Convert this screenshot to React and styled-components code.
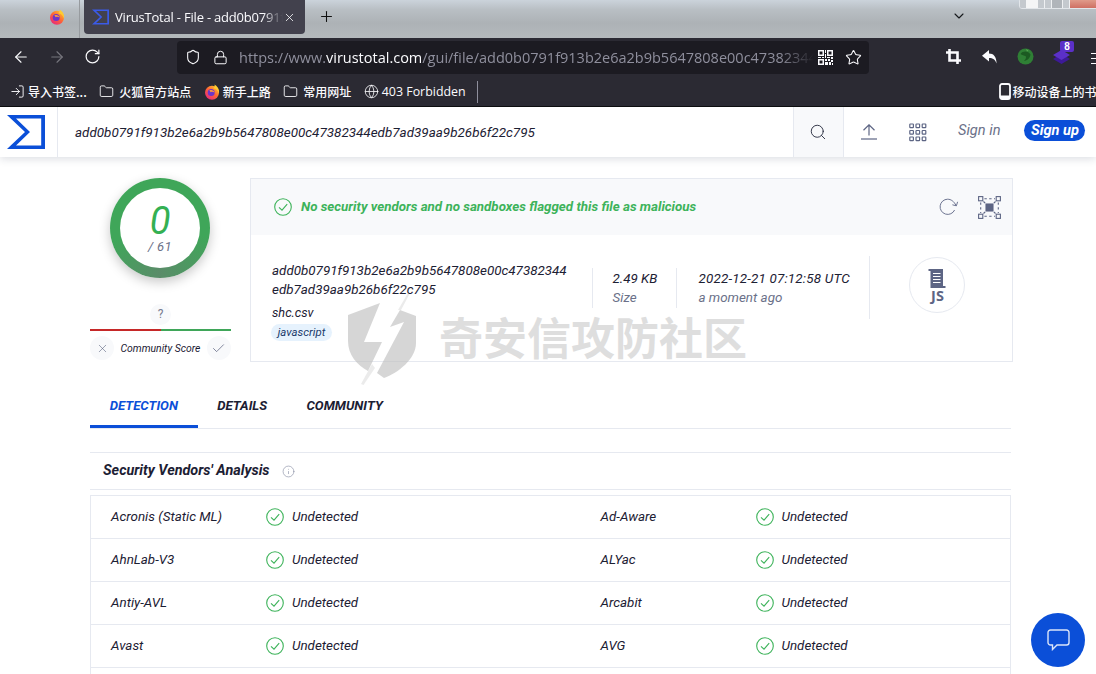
import React from "react";
import styled, { createGlobalStyle } from "styled-components";
import { ArrowLeft, ArrowRight, RotateCw, Shield, Lock, Star, Folder, Globe, LogIn, Search, X, Check, Plus, ChevronDown, Info } from "lucide-react";

const Global = createGlobalStyle`
  html, body { margin: 0; padding: 0; background: #fff; }
  * { box-sizing: border-box; }
  #root { width: 1096px; height: 674px; overflow: hidden; }
`;

const Screen = styled.div`
  position: relative;
  width: 1096px;
  height: 674px;
  overflow: hidden;
  background: #fff;
  font-family: Roboto, "Liberation Sans", sans-serif;
  color: #1c2033;
`;

const TitleBar = styled.div`
  position: relative;
  height: 38px;
  display: flex;
  align-items: flex-start;
  background: linear-gradient(180deg, #cbd3db 0%, #b9bfc4 25%, #adb2b6 60%, #b4b9bc 100%);
`;
const TabIconSlot = styled.div`
  width: 84px;
  height: 34px;
  padding-left: 49px;
  display: flex;
  align-items: center;
  position: relative;
  &::after { content: ""; position: absolute; left: 79px; top: 0; bottom: -4px; width: 1px; background: #979b9f; }
`;
const ActiveTab = styled.div`
  width: 221px;
  height: 34px;
  background: #42414d;
  border-radius: 0 0 4px 4px;
  display: flex;
  align-items: center;
  padding-left: 8px;
  color: #fbfbfe;
  font: 13px "Open Sans", "Noto Sans", sans-serif;
  letter-spacing: -0.2px;
  gap: 6px;
`;
const TabTitle = styled.span`
  width: 168px;
  white-space: nowrap;
  overflow: hidden;
  -webkit-mask-image: linear-gradient(90deg, #000 88%, transparent);
  mask-image: linear-gradient(90deg, #000 88%, transparent);
`;
const TabClose = styled.span`
  display: flex;
  margin-left: -6px;
`;
const NewTab = styled.div`
  width: 42px;
  height: 33px;
  display: flex;
  align-items: center;
  justify-content: center;
  color: #111;
`;
const TabChevron = styled.div`
  margin-left: 604px;
  padding-top: 8px;
  display: flex;
  color: #15181c;
`;
const WindowButtons = styled.div`
  position: absolute;
  left: 1019px;
  top: -2px;
  width: 82px;
  height: 11px;
  display: flex;
  border: 1px solid #e2e6ea;
  border-radius: 3px;
  overflow: hidden;
`;
const WindowButton = styled.div`
  flex: ${p => (p.$close ? 1.2 : 1)};
  background: ${p => (p.$close ? "linear-gradient(180deg, #e2a08f, #cf6f63)" : "#c4c9ce")};
  border-right: 1px solid #eef0f2;
  display: flex;
  justify-content: center;
  &::after {
    content: "";
    display: ${p => (p.$close ? "none" : "block")};
    width: 10px;
    height: 8px;
    background: ${p => (p.$box ? "#b0b5ba" : "#f4f5f6")};
    border: 1px solid ${p => (p.$box ? "#eef0f2" : "#f4f5f6")};
  }
`;

const NavBar = styled.div`
  height: 37px;
  background: #2b2a33;
  display: flex;
  align-items: center;
  color: #fbfbfe;
`;
const NavButtons = styled.div`
  width: 177px;
  display: flex;
  align-items: center;
  gap: 18px;
  padding-left: 12px;
`;
const UrlBar = styled.div`
  width: 692px;
  height: 33px;
  background: #1c1b22;
  border-radius: 4px;
  display: flex;
  align-items: center;
  margin-top: 1px;
  padding: 0 7px 0 8px;
`;
const LockSlot = styled.span`
  display: flex;
  margin-left: 12px;
`;
const UrlText = styled.div`
  flex: 1;
  margin-left: 11px;
  min-width: 0;
  white-space: nowrap;
  overflow: hidden;
  font: 14.5px "Open Sans", "Noto Sans", sans-serif;
  color: #8f8f9d;
  -webkit-mask-image: linear-gradient(90deg, #000 94%, transparent);
  mask-image: linear-gradient(90deg, #000 94%, transparent);
  b { font-weight: 400; color: #fbfbfe; }
`;
const UrlIcons = styled.div`
  display: flex;
  align-items: center;
  gap: 12px;
  margin-left: 4px;
`;
const Extensions = styled.div`
  display: flex;
  align-items: center;
  gap: 18px;
  margin-left: 75px;
`;
const ExtSlot = styled.div`
  position: relative;
  width: 18px;
  height: 18px;
  display: flex;
  align-items: center;
  justify-content: center;
`;
const ExtBadge = styled.span`
  position: absolute;
  top: -7px;
  right: -4px;
  width: 14px;
  height: 11px;
  border-radius: 2px;
  background: #5b30c9;
  color: #fff;
  font: bold 10px/11px "Liberation Sans", sans-serif;
  text-align: center;
`;
const MenuStub = styled.div`
  position: absolute;
  right: 0;
  top: 53px;
  width: 5px;
  height: 11px;
  border-top: 1px solid #fbfbfe;
  border-bottom: 1px solid #fbfbfe;
  &::after { content: ""; display: block; margin-top: 4px; height: 1px; background: #fbfbfe; }
`;

const BookmarkBar = styled.div`
  height: 32px;
  background: #2b2a33;
  border-bottom: 1px solid #0c0c0d;
  display: flex;
  align-items: center;
  gap: 12.5px;
  padding: 2px 0 0 10px;
  color: #fbfbfe;
  font: 500 12px "Noto Sans CJK SC", "Noto Sans", sans-serif;
  white-space: nowrap;
`;
const Bookmark = styled.div`
  flex-shrink: 0;
  display: flex;
  align-items: center;
  gap: ${p => p.$gap || 5}px;
`;
const LatinLabel = styled.span`
  font: 12.4px "Open Sans", "Noto Sans", sans-serif;
`;
const BookmarkSeparator = styled.div`
  flex-shrink: 0;
  width: 1px;
  height: 22px;
  margin-left: -1px;
  background: #8f8f9d;
`;
const MobileBookmark = styled(Bookmark)`
  margin-left: 508px;
`;

const AppHeader = styled.header`
  position: relative;
  height: 50px;
  display: flex;
  align-items: stretch;
  background: #fff;
  box-shadow: 0 2px 8px rgba(40, 50, 80, 0.16);
`;
const LogoCell = styled.div`
  width: 58px;
  border-right: 1px solid #e6e9f0;
  display: flex;
  align-items: center;
  padding-left: 7px;
`;
const HeaderHash = styled.div`
  flex: 1;
  display: flex;
  align-items: center;
  padding-left: 17px;
  font-size: 13.45px;
  font-style: italic;
  color: #1c2033;
`;
const SearchCell = styled.div`
  width: 51px;
  padding-right: 1px;
  background: #f8f9fb;
  border-left: 1px solid #e6e9f0;
  border-right: 1px solid #e6e9f0;
  display: flex;
  align-items: center;
  justify-content: center;
  color: #23273a;
`;
const HeaderActions = styled.div`
  width: 252px;
  display: flex;
  align-items: center;
  padding-left: 16px;
  color: #5d6584;
`;
const HeaderIcon = styled.div`
  display: flex;
  width: 18px;
  margin-right: ${p => p.$gap}px;
`;
const SignIn = styled.span`
  font-size: 14.6px;
  font-style: italic;
  color: #6b7189;
  margin-top: -4px;
`;
const SignUp = styled.span`
  margin: -4px 0 0 24px;
  width: 61px;
  height: 21px;
  border-radius: 11px;
  background: #0b4fd8;
  color: #fff;
  font-size: 14.6px;
  font-weight: 700;
  font-style: italic;
  line-height: 21px;
  text-align: center;
`;

const Content = styled.main`
  padding: 21px 0 0 90px;
`;
const ReportRow = styled.section`
  display: flex;
  gap: 19px;
`;
const ScoreColumn = styled.div`
  width: 141px;
  display: flex;
  flex-direction: column;
  align-items: center;
`;
const ScoreRing = styled.div`
  width: 100px;
  height: 100px;
  margin-left: -1px;
  border-radius: 50%;
  padding: 10px;
  background: conic-gradient(#3fa659 0deg, #3fa659 100deg, #5a8c69 180deg, #3fa659 255deg, #3fa659 360deg);
  box-shadow: 0 4px 12px rgba(0, 0, 0, 0.22);
`;
const ScoreInner = styled.div`
  width: 80px;
  height: 80px;
  border-radius: 50%;
  background: #fff;
  display: flex;
  flex-direction: column;
  align-items: center;
  font-style: italic;
  padding-top: 14px;
`;
const ScoreValue = styled.span`
  font-size: 38px;
  line-height: 38px;
  font-weight: 400;
  color: #34b053;
`;
const ScoreTotal = styled.span`
  font-size: 13px;
  line-height: 18px;
  margin-top: -2px;
  color: #6b7189;
  letter-spacing: 0.4px;
`;
const Unknown = styled.div`
  margin-top: 26px;
  width: 21px;
  height: 21px;
  border-radius: 50%;
  background: #f8f9fb;
  color: #777c90;
  font-size: 12px;
  line-height: 21px;
  text-align: center;
`;
const VoteBar = styled.div`
  margin-top: 4px;
  width: 100%;
  height: 2px;
  background: linear-gradient(90deg, #c62828 50%, #3fa659 50%);
`;
const VoteRow = styled.div`
  margin-top: 5px;
  width: 100%;
  display: flex;
  align-items: center;
  justify-content: space-between;
`;
const VoteButton = styled.div`
  width: 24px;
  height: 24px;
  border-radius: 50%;
  background: #f8f9fb;
  color: #4d5573;
  display: flex;
  align-items: center;
  justify-content: center;
`;
const VoteLabel = styled.span`
  font-size: 10.4px;
  font-style: italic;
  color: #1c2033;
`;

const Card = styled.div`
  width: 763px;
  height: 184px;
  border: 1px solid #e6e9f0;
`;
const Banner = styled.div`
  height: 56px;
  background: #f8f9fb;
  display: flex;
  align-items: center;
  padding: 0 11px 0 23px;
  gap: 9px;
  color: #3db35a;
`;
const BannerText = styled.span`
  flex: 1;
  font-size: 13.35px;
  font-weight: 700;
  font-style: italic;
  margin-top: -1px;
`;
const BannerIcon = styled.div`
  display: flex;
  color: #5d6584;
  margin-left: ${p => p.$gap}px;
`;
const CardBody = styled.div`
  display: flex;
  align-items: flex-start;
  font-size: 13.4px;
  font-style: italic;
`;
const FileColumn = styled.div`
  width: 341px;
  padding: 26px 0 0 21px;
`;
const HashLine = styled.div`
  line-height: 19px;
  color: #1c2033;
  white-space: nowrap;
`;
const FileName = styled.div`
  margin-top: 4px;
  line-height: 19px;
  font-size: 12.7px;
  color: #1c2033;
`;
const TypeTag = styled.span`
  display: block;
  width: 61px;
  height: 17px;
  margin: 2px 0 0 -1px;
  border-radius: 9px;
  background: #e6f2fd;
  font-size: 11.4px;
  line-height: 17px;
  text-align: center;
  color: #1a3a6b;
`;
const Meta = styled.div`
  margin-top: 33px;
  height: 40px;
  padding-top: 1px;
  padding-left: ${p => p.$pad}px;
  width: ${p => p.$w}px;
  border-left: 1px solid #e6e9f0;
  line-height: 19px;
`;
const MetaStrong = styled.div`
  letter-spacing: ${p => p.$track || 0}px;
  white-space: nowrap;
`;
const MetaSub = styled.div`
  color: #6b7189;
`;
const IconColumn = styled.div`
  margin-top: 21px;
  height: 63px;
  width: 143px;
  border-left: 1px solid #e6e9f0;
  display: flex;
  align-items: flex-start;
  padding: 1px 0 0 39px;
`;
const FileTypeIcon = styled.div`
  width: 56px;
  height: 56px;
  border: 1px solid #e6e9f0;
  border-radius: 50%;
  display: flex;
  align-items: center;
  justify-content: center;
  color: #5d6584;
`;

const Tabs = styled.nav`
  margin-top: 23px;
  width: 921px;
  height: 44px;
  display: flex;
  border-bottom: 1px solid #e6e9f0;
`;
const TabItem = styled.div`
  height: 43px;
  padding: 13px 19.7px 0;
  font-size: 13.15px;
  font-weight: 700;
  font-style: italic;
  line-height: 15px;
  color: ${p => (p.$active ? "#0b4fd8" : "#1c2033")};
  border-bottom: 3px solid ${p => (p.$active ? "#0b4fd8" : "transparent")};
`;
const SectionHead = styled.div`
  margin-top: 23px;
  width: 921px;
  height: 38px;
  border-top: 1px solid #e6e9f0;
  border-bottom: 1px solid #e6e9f0;
  display: flex;
  align-items: center;
  gap: 12px;
  padding: 0 0 2px 13px;
  font-size: 14.4px;
  font-weight: 700;
  font-style: italic;
  color: #1c2033;
`;
const InfoMark = styled.span`
  display: flex;
  color: #8a8fa5;
  margin-top: 2px;
`;
const VendorTable = styled.div`
  margin-top: 5px;
  width: 921px;
  border: 1px solid #e6e9f0;
  border-bottom: 0;
`;
const VendorRow = styled.div`
  height: 43px;
  display: grid;
  grid-template-columns: 489.5px 1fr;
  border-bottom: 1px solid #e6e9f0;
`;
const VendorCell = styled.div`
  display: flex;
  align-items: center;
  padding-left: 20px;
  font-size: 13.4px;
  font-style: italic;
  color: #1c2033;
`;
const VendorName = styled.span`
  width: 155px;
  margin-top: -2px;
`;
const Status = styled.span`
  display: flex;
  align-items: center;
  gap: 8px;
`;
const StatusLabel = styled.span`
  margin-top: -2px;
`;

const Watermark = styled.div`
  position: absolute;
  left: 348px;
  top: 293px;
  display: flex;
  align-items: center;
  gap: 23px;
  pointer-events: none;
`;
const WatermarkText = styled.span`
  font: 700 44px/1 "Noto Sans CJK SC", sans-serif;
  color: rgba(190, 190, 190, 0.5);
  margin-top: -7px;
  white-space: nowrap;
`;
const ChatButton = styled.div`
  position: absolute;
  left: 1031px;
  top: 613px;
  width: 54px;
  height: 54px;
  border-radius: 50%;
  background: #0b4fd8;
  display: flex;
  align-items: center;
  justify-content: center;
`;

const FirefoxIcon = ({ size = 16, id = "ffo" }) => (
  <svg width={size} height={size} viewBox="0 0 16 16">
    <defs>
      <linearGradient id={id} x1="0.85" y1="0.05" x2="0.15" y2="0.95">
        <stop offset="0" stopColor="#ffc22e" />
        <stop offset="0.45" stopColor="#ff6a32" />
        <stop offset="1" stopColor="#e8247f" />
      </linearGradient>
    </defs>
    <circle cx="8" cy="8.8" r="7" fill={`url(#${id})`} />
    <path d="M10.5 0.6C13.4 2.4 15.6 5.4 15 9.4C13.8 6.2 12 4.4 9.4 4.2C10.6 3.2 10.9 2 10.5 0.6Z" fill="#ffcb30" />
    <circle cx="7.2" cy="8.4" r="3.5" fill="#6d35c9" />
    <path d="M5.4 6.4C7.2 5.4 10 6 10.6 8.6C9.4 7.6 8 7.4 6.8 8.2Z" fill="#ff9a3c" />
  </svg>
);
const VtMark = ({ w = 38, h = 34, color = "#0b4fd8" }) => (
  <svg width={w} height={h} viewBox="0 0 38 34">
    <path fillRule="evenodd" fill={color} d="M0 0H38V34H0L18 17ZM9 3.6L23 17L9 30.4H34.2V3.6Z" />
  </svg>
);
const QrIcon = () => (
  <svg width="15" height="15" viewBox="0 0 15 15" fill="#fbfbfe">
    <path fillRule="evenodd" d="M0 0H6V6H0ZM1.5 1.5V4.5H4.5V1.5ZM9 0H15V6H9ZM10.5 1.5V4.5H13.5V1.5ZM0 9H6V15H0ZM1.5 10.5V13.5H4.5V10.5Z" />
    <path d="M7 0H8V3H7ZM7 4H8V8H7ZM0 7H3V8H0ZM4 7H6V8H4ZM9 7H12V8H9ZM13 7H15V9H13ZM7 9H9V11H7ZM10 9H12V11H10ZM13 10H15V12H13ZM7 12H10V15H7ZM11 12H13V15H11ZM14 13H15V15H14Z" />
  </svg>
);
const CropIcon = () => (
  <svg width="15" height="15" viewBox="0 0 15 15" fill="none" stroke="#fbfbfe" strokeWidth="2.6">
    <path d="M3.5 0V11.5H15M0 3.5H11.5V15" />
  </svg>
);
const UndoIcon = () => (
  <svg width="15" height="14" viewBox="0 0 15 14" fill="#fbfbfe">
    <path d="M7 0V3.6C11.6 3.6 14.4 6.6 14.6 13.6C13.2 9.6 11 8 7 8V11.6L0 5.8Z" />
  </svg>
);
const GreenExt = () => (
  <svg width="17" height="17" viewBox="0 0 17 17">
    <circle cx="8.5" cy="8.5" r="8" fill="#2f7f35" />
    <path d="M3.5 6C6 2.5 11.5 3 13.5 6.5C13 10 10.5 12.5 7 13C9 11 9.5 9 8.5 8C7 7.4 5 7.4 3.5 6Z" fill="#1c5a22" />
    <path d="M9 1L11.5 2.5L10 3.5Z" fill="#5aa552" />
  </svg>
);
const LayersExt = () => (
  <svg width="17" height="14" viewBox="0 0 17 14">
    <path d="M8.5 4L17 9L8.5 14L0 9Z" fill="#3d1a98" />
    <path d="M8.5 0L17 5L8.5 10L0 5Z" fill="#5b30c9" />
  </svg>
);
const PhoneIcon = () => (
  <svg width="12" height="17" viewBox="0 0 12 17">
    <rect x="1" y="1" width="10" height="15" rx="2" fill="none" stroke="#fbfbfe" strokeWidth="1.8" />
    <path d="M1 12.5H11V14.5A1.5 1.5 0 0 1 9.5 16H2.5A1.5 1.5 0 0 1 1 14.5Z" fill="#fbfbfe" />
  </svg>
);
const UploadIcon = () => (
  <svg width="18" height="16" viewBox="0 0 18 16" fill="none" stroke="#5d6584" strokeWidth="1.2">
    <path d="M9 11.5V1M3.5 6.2L9 0.8L14.5 6.2" />
    <path d="M1 15H17" />
  </svg>
);
const GridIcon = () => (
  <svg width="18" height="19" viewBox="0 0 18 19" fill="none" stroke="#5d6584" strokeWidth="1.2">
    {[1, 7.5, 14].map(y =>
      [0.8, 7, 13.2].map(x => <rect key={`${x}-${y}`} x={x} y={y} width="3.6" height="3.6" rx="0.6" />)
    )}
  </svg>
);
const CheckCircle = ({ size = 18, color = "#3db35a" }) => (
  <svg width={size} height={size} viewBox="0 0 18 18" fill="none" stroke={color} strokeWidth="1.1">
    <circle cx="9" cy="9" r="8.3" />
    <path d="M5 9.3L8 12.2L13.2 6.2" />
  </svg>
);
const ReanalyzeIcon = () => (
  <svg width="20" height="18" viewBox="0 0 20 18" fill="none" stroke="#5d6584" strokeWidth="0.9">
    <path d="M15.6 12A7.6 7.6 0 1 1 8.6 1.2C12 1.2 15 3.4 17 7.4" />
    <path d="M13.4 6.8L17.4 7.8L18.6 3.8" />
  </svg>
);
const SummaryIcon = () => (
  <svg width="23" height="23" viewBox="0 0 23 23" fill="none" stroke="#5d6584" strokeWidth="1.1">
    <rect x="0.6" y="0.6" width="4.2" height="4.2" />
    <rect x="18.2" y="0.6" width="4.2" height="4.2" />
    <rect x="0.6" y="18.2" width="4.2" height="4.2" />
    <rect x="18.2" y="18.2" width="4.2" height="4.2" />
    <rect x="8" y="8" width="7" height="7" fill="#5d6584" />
    <path strokeDasharray="2.4 2.4" d="M6.4 2.7H17M6.4 20.3H17M2.7 6.4V17M20.3 6.4V17M5.5 5.5L8 8M17.5 5.5L15 8M5.5 17.5L8 15M17.5 17.5L15 15" />
  </svg>
);
const JsScrollIcon = () => (
  <svg width="18" height="35" viewBox="0 0 18 35" overflow="visible">
    <path d="M0.5 1H15V18H17.5V20H2.5V3H0.5Z" fill="#5d6584" />
    <path d="M5 5.5H12.5M5 8.5H12.5M5 11.5H12.5M5 14.5H12.5" stroke="#fff" strokeWidth="1" />
    <text x="9.5" y="33" textAnchor="middle" fontFamily="Open Sans, sans-serif" fontStyle="normal" fontWeight="700" fontSize="14.5" fill="#5d6584">JS</text>
  </svg>
);
const ChatIcon = () => (
  <svg width="23" height="22" viewBox="0 0 23 22" fill="none" stroke="#fff" strokeOpacity="0.85" strokeWidth="1.4">
    <path d="M3.5 1H19.5A2.5 2.5 0 0 1 22 3.5V13.5A2.5 2.5 0 0 1 19.5 16H10L5.5 20.5V16H3.5A2.5 2.5 0 0 1 1 13.5V3.5A2.5 2.5 0 0 1 3.5 1Z" />
  </svg>
);
const WatermarkShield = () => (
  <svg width="68" height="92" viewBox="0 0 68 92" fill="#bdbdbd" fillOpacity="0.62">
    <path d="M0 22L32 10L16 49L34 49L20 78C9 72 0 62 0 48Z" />
    <path d="M52 17L68 23V50C68 66 50 80 36 85L29 80L56 29L42 34Z" />
    <path d="M60 0L50 17L53 17L61.5 1Z" fillOpacity="0.3" />
    <path d="M24 71L13 91L15.5 92L27 75Z" fillOpacity="0.3" />
  </svg>
);

const vendors = [
  ["Acronis (Static ML)", "Ad-Aware"],
  ["AhnLab-V3", "ALYac"],
  ["Antiy-AVL", "Arcabit"],
  ["Avast", "AVG"],
  ["", ""],
];

const VendorEntry = ({ name }) => (
  <VendorCell>
    <VendorName>{name}</VendorName>
    {name && (
      <Status>
        <CheckCircle />
        <StatusLabel>Undetected</StatusLabel>
      </Status>
    )}
  </VendorCell>
);

export default function App() {
  return (
    <Screen>
      <Global />
      <TitleBar>
        <TabIconSlot><FirefoxIcon id="ffTab" /></TabIconSlot>
        <ActiveTab>
          <VtMark w={17} h={16} color="#3b5be8" />
          <TabTitle>VirusTotal - File - add0b0791f913b2e</TabTitle>
          <TabClose><X size={13} strokeWidth={1.5} /></TabClose>
        </ActiveTab>
        <NewTab><Plus size={17} strokeWidth={1.5} /></NewTab>
        <TabChevron><ChevronDown size={16} strokeWidth={1.6} /></TabChevron>
        <WindowButtons>
          <WindowButton /><WindowButton $box /><WindowButton $close />
        </WindowButtons>
      </TitleBar>
      <NavBar>
        <NavButtons>
          <ArrowLeft size={18} strokeWidth={1.5} />
          <ArrowRight size={18} strokeWidth={1.5} color="#77767e" />
          <RotateCw size={17} strokeWidth={1.7} />
        </NavButtons>
        <UrlBar>
          <Shield size={16} strokeWidth={1.6} />
          <LockSlot><Lock size={15} strokeWidth={1.6} /></LockSlot>
          <UrlText>https://www.<b>virustotal.com</b>/gui/file/add0b0791f913b2e6a2b9b5647808e00c47382344edb7ad39</UrlText>
          <UrlIcons>
            <QrIcon />
            <Star size={17} strokeWidth={1.5} />
          </UrlIcons>
        </UrlBar>
        <Extensions>
          <ExtSlot><CropIcon /></ExtSlot>
          <ExtSlot><UndoIcon /></ExtSlot>
          <ExtSlot><GreenExt /></ExtSlot>
          <ExtSlot><LayersExt /><ExtBadge>8</ExtBadge></ExtSlot>
        </Extensions>
      </NavBar>
      <MenuStub />
      <BookmarkBar>
        <Bookmark $gap={3}><LogIn size={15} strokeWidth={1.5} />导入书签...</Bookmark>
        <Bookmark><Folder size={15} strokeWidth={1.4} />火狐官方站点</Bookmark>
        <Bookmark $gap={3}><FirefoxIcon size={16} id="ffMark" />新手上路</Bookmark>
        <Bookmark><Folder size={15} strokeWidth={1.4} />常用网址</Bookmark>
        <Bookmark $gap={3}><Globe size={15} strokeWidth={1.3} /><LatinLabel>403 Forbidden</LatinLabel></Bookmark>
        <BookmarkSeparator />
        <MobileBookmark $gap={2}><PhoneIcon />移动设备上的书签</MobileBookmark>
      </BookmarkBar>

      <AppHeader>
        <LogoCell><VtMark /></LogoCell>
        <HeaderHash>add0b0791f913b2e6a2b9b5647808e00c47382344edb7ad39aa9b26b6f22c795</HeaderHash>
        <SearchCell><Search size={18} strokeWidth={1.2} /></SearchCell>
        <HeaderActions>
          <HeaderIcon $gap={31}><UploadIcon /></HeaderIcon>
          <HeaderIcon $gap={31}><GridIcon /></HeaderIcon>
          <SignIn>Sign in</SignIn>
          <SignUp>Sign up</SignUp>
        </HeaderActions>
      </AppHeader>

      <Content>
        <ReportRow>
          <ScoreColumn>
            <ScoreRing>
              <ScoreInner>
                <ScoreValue>0</ScoreValue>
                <ScoreTotal>/ 61</ScoreTotal>
              </ScoreInner>
            </ScoreRing>
            <Unknown>?</Unknown>
            <VoteBar />
            <VoteRow>
              <VoteButton><X size={13} strokeWidth={1} /></VoteButton>
              <VoteLabel>Community Score</VoteLabel>
              <VoteButton><Check size={15} strokeWidth={1.1} /></VoteButton>
            </VoteRow>
          </ScoreColumn>
          <Card>
            <Banner>
              <CheckCircle />
              <BannerText>No security vendors and no sandboxes flagged this file as malicious</BannerText>
              <BannerIcon $gap={0}><ReanalyzeIcon /></BannerIcon>
              <BannerIcon $gap={10}><SummaryIcon /></BannerIcon>
            </Banner>
            <CardBody>
              <FileColumn>
                <HashLine>add0b0791f913b2e6a2b9b5647808e00c47382344</HashLine>
                <HashLine>edb7ad39aa9b26b6f22c795</HashLine>
                <FileName>shc.csv</FileName>
                <TypeTag>javascript</TypeTag>
              </FileColumn>
              <Meta $pad={20} $w={85}>
                <MetaStrong>2.49 KB</MetaStrong>
                <MetaSub>Size</MetaSub>
              </Meta>
              <Meta $pad={21} $w={193}>
                <MetaStrong $track={0.2}>2022-12-21 07:12:58 UTC</MetaStrong>
                <MetaSub>a moment ago</MetaSub>
              </Meta>
              <IconColumn>
                <FileTypeIcon><JsScrollIcon /></FileTypeIcon>
              </IconColumn>
            </CardBody>
          </Card>
        </ReportRow>

        <Tabs>
          <TabItem $active>DETECTION</TabItem>
          <TabItem>DETAILS</TabItem>
          <TabItem>COMMUNITY</TabItem>
        </Tabs>
        <SectionHead>
          Security Vendors' Analysis
          <InfoMark><Info size={13} strokeWidth={1.2} /></InfoMark>
        </SectionHead>
        <VendorTable>
          {vendors.map(([a, b], i) => (
            <VendorRow key={i}>
              <VendorEntry name={a} />
              <VendorEntry name={b} />
            </VendorRow>
          ))}
        </VendorTable>
      </Content>

      <Watermark>
        <WatermarkShield />
        <WatermarkText>奇安信攻防社区</WatermarkText>
      </Watermark>
      <ChatButton><ChatIcon /></ChatButton>
    </Screen>
  );
}
